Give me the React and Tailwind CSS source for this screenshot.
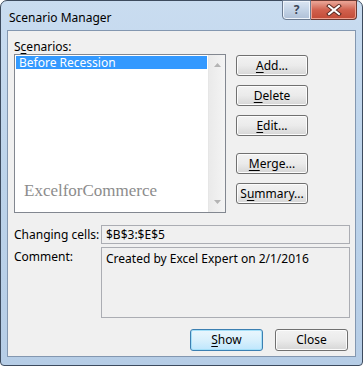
import React from "react";

const ui = "font-['Segoe_UI','Noto_Sans',sans-serif] text-[12px] text-black";

const Btn = ({ children, className = "", primary = false }) => (
  <button
    className={`h-[21px] w-[72px] rounded-[3px] border leading-none ${
      primary
        ? "border-[#3c7fb1] bg-gradient-to-b from-[#eaf6fd] via-[#d9f0fc] to-[#bee6fd] shadow-[inset_0_0_0_1px_#a4dff8]"
        : "border-[#707070] bg-gradient-to-b from-[#f2f2f2] via-[#ebebeb] to-[#d6d6d6] shadow-[inset_0_0_0_1px_#fcfcfc]"
    } ${className}`}
  >
    {children}
  </button>
);

const U = ({ children }) => <span className="underline underline-offset-2">{children}</span>;

export default function App() {
  return (
    <div className={`w-[363px] h-[368px] bg-white ${ui}`}>
      <div className="relative w-[363px] h-[366px] rounded-t-[7px] rounded-b-[4px] border border-[#3d4b5e] bg-gradient-to-b from-[#c9dcf0] via-[#bcd3ea] to-[#b6cde6] flex flex-col">
        {/* title bar */}
        <div className="h-[29px] flex items-center pl-[8px] shrink-0">
          <span className="text-[12px] text-black mt-[4px]">Scenario Manager</span>
        </div>
        <div className="absolute top-[-1px] left-[281px] flex">
          <div className="w-[29px] h-[20px] rounded-bl-[4px] border border-[#6b7b91] bg-gradient-to-b from-[#dbe6f3] via-[#c3d3e6] to-[#aebfd6] flex items-center justify-center text-[#3c4656] font-bold text-[12px] shadow-[inset_0_0_0_1px_#eef4fb]">
            ?
          </div>
          <div className="w-[46px] h-[20px] rounded-br-[4px] border border-l-0 border-[#6b3a33] bg-gradient-to-b from-[#e9a99c] via-[#d0604d] to-[#c24a36] flex items-center justify-center shadow-[inset_0_0_0_1px_#eea08f]">
            <svg width="16" height="12" viewBox="0 0 16 12">
              <path d="M3 2 L13 10 M13 2 L3 10" stroke="#5a2a22" strokeWidth="4" strokeLinecap="square" />
              <path d="M3 2 L13 10 M13 2 L3 10" stroke="#ffffff" strokeWidth="2" strokeLinecap="square" />
            </svg>
          </div>
        </div>

        {/* client */}
        <div className="mx-[6px] h-[327px] border border-[#8397b0] bg-[#f0f0f0] pl-[6px] pr-[5px] pt-[9px] flex flex-col">
          <div className="h-[14px] leading-[14px]">
            S<U>c</U>enarios:
          </div>
          <div className="flex">
            <div className="relative w-[212px] h-[159px] border border-[#828790] bg-white flex">
              <div className="flex-1 p-[1px]">
                <div className="h-[13px] bg-[#3399ff] text-white leading-[13px] pl-[3px]">Before Recession</div>
              </div>
              <div className="w-[17px] h-full bg-gradient-to-r from-[#eaeaea] to-[#f4f4f4] border-l border-[#e6e6e6] flex flex-col items-center justify-between py-[8px]">
                <svg width="7" height="4" viewBox="0 0 7 4">
                  <path d="M0 4 L3.5 0 L7 4 Z" fill="#b4b4b4" />
                </svg>
                <svg width="7" height="4" viewBox="0 0 7 4">
                  <path d="M0 0 L3.5 4 L7 0 Z" fill="#b4b4b4" />
                </svg>
              </div>
              <span className="absolute left-[9px] top-[123px] font-['Liberation_Serif',serif] text-[17px] text-[#8c8c8c]">
                ExcelforCommerce
              </span>
            </div>
            <div className="ml-[10px] pt-[1px] flex flex-col">
              <Btn>
                <U>A</U>dd...
              </Btn>
              <Btn className="mt-[9px]">
                <U>D</U>elete
              </Btn>
              <Btn className="mt-[9px]">
                <U>E</U>dit...
              </Btn>
              <Btn className="mt-[17px]">
                <U>M</U>erge...
              </Btn>
              <Btn className="mt-[9px]">
                S<U>u</U>mmary...
              </Btn>
            </div>
          </div>

          <div className="mt-[12px] flex items-center">
            <span className="w-[87px]">Changing cells:</span>
            <div className="flex-1 h-[19px] border border-[#abadb3] bg-[#f0f0f0] pl-[4px] leading-[17px]">$B$3:$E$5</div>
          </div>
          <div className="mt-[3px] flex">
            <span className="w-[87px] pt-[1px]">Comment:</span>
            <div className="flex-1 h-[71px] border border-[#abadb3] bg-[#f0f0f0] pl-[4px] pt-[2px]">
              Created by Excel Expert on 2/1/2016
            </div>
          </div>
          <div className="mt-[11px] flex justify-end gap-[12px] pr-[2px]">
            <Btn primary className="h-[22px] w-[73px]">
              <U>S</U>how
            </Btn>
            <Btn className="h-[22px] w-[73px]">Close</Btn>
          </div>
        </div>
      </div>
    </div>
  );
}
